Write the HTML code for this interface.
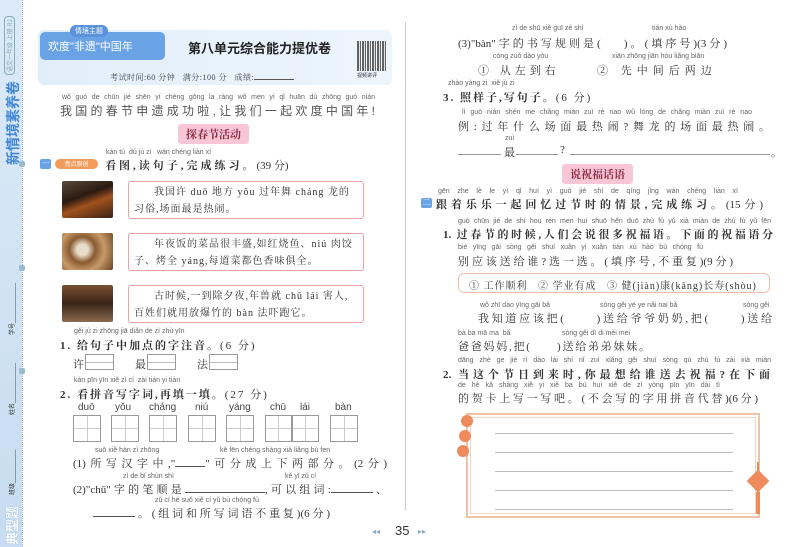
<!DOCTYPE html>
<html><head><meta charset="utf-8"><style>
*{margin:0;padding:0;box-sizing:border-box}
body{width:800px;height:547px;background:#fff;position:relative;overflow:hidden;font-family:"Liberation Serif","Noto Serif CJK SC","Noto Sans CJK SC",serif;color:#333}
.a{position:absolute;white-space:nowrap}
.j{position:absolute;white-space:nowrap;text-align:justify;text-align-last:justify;letter-spacing:0 !important;overflow:visible}
.py{font-family:"Liberation Sans",sans-serif;font-size:7px;color:#666}
.t{font-size:11px;color:#333;letter-spacing:2px}
.b{font-weight:bold}
.box{position:absolute;border:1px solid #999;background:linear-gradient(#bbb,#bbb) center/100% 1px no-repeat}
.tz{position:absolute;border:1px solid #999;background:linear-gradient(#ccc,#ccc) center/100% 1px no-repeat,linear-gradient(#ccc,#ccc) center/1px 100% no-repeat}
.sent{position:absolute;border:1.5px solid #e9a3a0;border-radius:3px;font-size:10px;line-height:17px;padding:2px 5px;color:#333;letter-spacing:1px}
.img{position:absolute;border-radius:2px}
.ln{position:absolute;height:1px;background:#999}
.tag{position:absolute;background:#f8c6d7;color:#8a2a40;font-weight:bold;font-size:11px;padding:2px 8px;border-radius:3px}
.rot{position:absolute;transform-origin:0 0;transform:rotate(-90deg);white-space:nowrap;font-family:'Liberation Sans','Noto Sans CJK SC',sans-serif}
</style></head><body>
<!-- sidebar -->
<div class="a" style="left:0;top:0;width:22px;height:547px;background:linear-gradient(#dceaf7,#c7dcf1)"></div>
<div class="a" style="left:22px;top:0;width:1px;height:547px;border-left:1px dotted #9bb8d8"></div>
<div class="rot" style="left:3px;top:165px;font-size:14px;font-weight:bold;color:#3f86d6">新情境素养卷</div>
<div class="rot" style="left:4px;top:75px;font-size:6px;color:#8aa;border:1px solid #8ab;border-radius:4px;padding:0 2px">语文一年级 上册 RJ</div>
<div class="rot" style="left:7px;top:335px;font-size:6px;color:#333">学号____________</div>
<div class="rot" style="left:7px;top:415px;font-size:6px;color:#333">姓名____________</div>
<div class="rot" style="left:7px;top:495px;font-size:6px;color:#333">班级__________</div>
<div class="rot" style="left:2px;top:545px;font-size:13px;font-weight:bold;color:#fff;text-shadow:0 0 1px #6aa0e0">典型题</div>
<div class="a" style="left:19px;top:161px;width:6px;height:6px;background:#9bc;border-radius:2px"></div>
<div class="a" style="left:19px;top:265px;width:6px;height:6px;background:#9bc;border-radius:2px"></div>
<div class="a" style="left:19px;top:368px;width:6px;height:6px;background:#9bc;border-radius:2px"></div>

<!-- header -->
<div class="a" style="left:38px;top:30px;width:354px;height:55px;background:linear-gradient(90deg,#e1eefa,#edf5fc);border-radius:6px"></div>
<div class="a" style="left:40px;top:32px;width:125px;height:28px;background:#6aa2e6;border-radius:5px;color:#fff;font-size:11px;padding:6px 8px;font-family:'Liberation Sans','Noto Sans CJK SC',sans-serif">欢度"非遗"中国年</div>
<div class="a" style="left:70px;top:25px;height:12px;background:#5b92dc;border-radius:6px;color:#fff;font-size:7px;padding:1px 5px;font-family:'Noto Sans CJK SC',sans-serif">情境主题</div>
<div class="a" style="left:188px;top:38px;font-size:13px;font-weight:bold;color:#222;font-family:'Liberation Sans','Noto Sans CJK SC',sans-serif">第八单元综合能力提优卷</div>
<div class="a" style="left:357px;top:41px;width:30px;height:30px;background:repeating-linear-gradient(90deg,#333 0 2px,#ddd 2px 3px,#333 3px 4px,#fff 4px 5px),#333;opacity:.75"></div>
<div class="a" style="left:357px;top:72px;font-size:5px;color:#333;font-family:'Noto Sans CJK SC',sans-serif">视频讲评</div>
<div class="a" style="left:110px;top:72px;font-size:8px;color:#444;letter-spacing:.5px">考试时间:60 分钟&nbsp;&nbsp; 满分:100 分&nbsp;&nbsp; 成绩:<span style="display:inline-block;width:40px;border-bottom:1px solid #555"></span></div>

<div class="j py" style="left:62px;top:94px;width:313px">wǒ guó de chūn jié shēn yí chéng gōng la ràng wǒ men yì qǐ huān dù zhōng guó nián</div>
<div class="j t" style="left:60px;top:102px;width:315px;font-size:12px;color:#555;font-family:'Liberation Sans','Noto Sans CJK SC',sans-serif">我国的春节申遗成功啦,让我们一起欢度中国年!</div>
<div class="tag" style="left:178px;top:124px">探春节活动</div>

<div class="a py" style="left:106px;top:149px">kàn tú &nbsp;dú jù zi &nbsp;&nbsp;wán chéng liàn xí</div>
<div class="a" style="left:40px;top:159px;width:11px;height:10px;background:#6aa2e6;border-radius:2px;color:#fff;font-size:8px;text-align:center;line-height:10px">一</div>
<div class="a" style="left:55px;top:159px;width:43px;height:10px;background:#f29b5a;border-radius:5px;color:#fff;font-size:6px;text-align:center;line-height:10px;font-family:'Noto Sans CJK SC',sans-serif">亮点原创</div>
<div class="a t b" style="left:105px;top:157px;font-size:11px;letter-spacing:3px">看图,读句子,完成练习。<span style="font-weight:normal;letter-spacing:0">(39 分)</span></div>

<div class="img" style="left:62px;top:181px;width:51px;height:37px;background:linear-gradient(160deg,#5a4a3a,#2a1a12 40%,#a0521d 60%,#3a2015)"></div>
<div class="sent" style="left:128px;top:181px;width:236px;height:38px;text-indent:20px">我国许 duō 地方 yǒu 过年舞 cháng 龙的习俗,场面最是热闹。</div>
<div class="img" style="left:62px;top:233px;width:51px;height:37px;background:radial-gradient(circle at 40% 45%,#e8dccb 15%,#8a5a30 35%,#c79a6a 60%,#6a4020)"></div>
<div class="sent" style="left:128px;top:233px;width:236px;height:38px;text-indent:20px">年夜饭的菜品很丰盛,如红烧鱼、niú 肉饺子、烤全 yáng,每道菜都色香味俱全。</div>
<div class="img" style="left:62px;top:285px;width:51px;height:37px;background:linear-gradient(180deg,#7a5030,#3a2418 50%,#8a6a50)"></div>
<div class="sent" style="left:128px;top:285px;width:236px;height:38px;text-indent:20px">古时候,一到除夕夜,年兽就 chū lái 害人,百姓们就用放爆竹的 bàn 法吓跑它。</div>

<div class="a py" style="left:74px;top:328px">gěi jù zi zhōng jiā diǎn de zì zhù yīn</div>
<div class="a t b" style="left:60px;top:337px">1. 给句子中加点的字注音。<span style="font-weight:normal">(6 分)</span></div>
<div class="a t" style="left:73px;top:356px">许</div><div class="box" style="left:85px;top:354px;width:29px;height:16px"></div>
<div class="a t" style="left:135px;top:356px">最</div><div class="box" style="left:147px;top:354px;width:29px;height:16px"></div>
<div class="a t" style="left:197px;top:356px">法</div><div class="box" style="left:209px;top:354px;width:29px;height:16px"></div>

<div class="a py" style="left:74px;top:377px">kàn pīn yīn xiě zì cí &nbsp;zài tián yi tián</div>
<div class="a t b" style="left:60px;top:386px">2. 看拼音写字词,再填一填。<span style="font-weight:normal">(27 分)</span></div>
<div class="a" style="left:78px;top:402px;font-family:'Liberation Sans',sans-serif;font-size:10px;color:#444">
<span class="a" style="left:0">duō</span><span class="a" style="left:37px">yǒu</span><span class="a" style="left:71px">cháng</span><span class="a" style="left:117px">niú</span><span class="a" style="left:151px">yáng</span><span class="a" style="left:192px">chū</span><span class="a" style="left:222px">lái</span><span class="a" style="left:257px">bàn</span></div>
<div class="tz" style="left:73px;top:415px;width:28px;height:27px"></div>
<div class="tz" style="left:111px;top:415px;width:28px;height:27px"></div>
<div class="tz" style="left:149px;top:415px;width:28px;height:27px"></div>
<div class="tz" style="left:188px;top:415px;width:28px;height:27px"></div>
<div class="tz" style="left:226px;top:415px;width:28px;height:27px"></div>
<div class="tz" style="left:265px;top:415px;width:27px;height:27px"></div>
<div class="tz" style="left:292px;top:415px;width:27px;height:27px"></div>
<div class="tz" style="left:330px;top:415px;width:28px;height:27px"></div>

<div class="a py" style="left:95px;top:447px">suǒ xiě hàn zì zhōng</div>
<div class="a py" style="left:220px;top:447px">kě fēn chéng shàng xià liǎng bù fen</div>
<div class="j t" style="left:73px;top:455px;width:314px">(1)所写汉字中,"<span style="display:inline-block;width:30px;border-bottom:1px solid #555"></span>"可分成上下两部分。(2分)</div>
<div class="a py" style="left:123px;top:473px">zì de bǐ shùn shì</div>
<div class="a py" style="left:285px;top:473px">kě yǐ zǔ cí</div>
<div class="j t" style="left:73px;top:481px;width:314px">(2)"chū"字的笔顺是<span style="display:inline-block;width:80px;border-bottom:1px solid #555"></span>,可以组词:<span style="display:inline-block;width:42px;border-bottom:1px solid #555"></span>、</div>
<div class="a py" style="left:155px;top:497px">zǔ cí hé suǒ xiě cí yǔ bù chóng fù</div>
<div class="j t" style="left:93px;top:505px;width:237px"><span style="display:inline-block;width:42px;border-bottom:1px solid #555"></span>。(组词和所写词语不重复)(6分)</div>

<div class="a" style="left:372px;top:527px;font-size:8px;color:#8ab">◂◂</div>
<div class="a" style="left:395px;top:523px;font-size:13px;color:#333;font-family:'Liberation Sans',sans-serif">35</div>
<div class="a" style="left:418px;top:527px;font-size:8px;color:#8ab">▸▸</div>

<div class="a" style="left:405px;top:22px;width:1px;height:488px;background:#ccc"></div>

<!-- right page -->
<div class="a py" style="left:512px;top:25px">zì de shū xiě guī zé shì</div>
<div class="a py" style="left:652px;top:25px">tián xù hào</div>
<div class="j t" style="left:458px;top:35px;width:269px">(3)"bàn"字的书写规则是(&nbsp;&nbsp;&nbsp;&nbsp;)。(填序号)(3分)</div>
<div class="a py" style="left:493px;top:53px">cóng zuǒ dào yòu</div>
<div class="a py" style="left:612px;top:53px">xiān zhōng jiān hòu liǎng biān</div>
<div class="a t" style="left:478px;top:62px;letter-spacing:4px">① 从左到右</div>
<div class="a t" style="left:597px;top:62px;letter-spacing:5px">② 先中间后两边</div>
<div class="a py" style="left:448px;top:80px">zhào yàng zi &nbsp;xiě jù zi</div>
<div class="a t b" style="left:443px;top:89px">3. 照样子,写句子。<span style="font-weight:normal">(6 分)</span></div>
<div class="j py" style="left:462px;top:109px;width:290px">lì guò nián shén me chǎng miàn zuì rè nao wǔ lóng de chǎng miàn zuì rè nao</div>
<div class="j t" style="left:458px;top:118px;width:312px">例:过年什么场面最热闹?舞龙的场面最热闹。</div>
<div class="a py" style="left:505px;top:135px">zuì</div>
<div class="ln" style="left:458px;top:154px;width:43px"></div>
<div class="a t" style="left:504px;top:144px">最</div>
<div class="ln" style="left:516px;top:154px;width:42px"></div>
<div class="a t" style="left:560px;top:144px">?</div>
<div class="ln" style="left:570px;top:154px;width:200px"></div>
<div class="a t" style="left:771px;top:144px">。</div>
<div class="tag" style="left:562px;top:164px">说祝福话语</div>

<div class="j py" style="left:438px;top:188px;width:300px">gēn zhe lè le yì qǐ huí yì guò jié shí de qíng jǐng wán chéng liàn xí</div>
<div class="a" style="left:421px;top:198px;width:11px;height:10px;background:#6aa2e6;border-radius:2px;color:#fff;font-size:8px;text-align:center;line-height:10px">二</div>
<div class="j t b" style="left:436px;top:196px;width:327px">跟着乐乐一起回忆过节时的情景,完成练习。<span style="font-weight:normal">(15分)</span></div>
<div class="j py" style="left:458px;top:218px;width:313px">guò chūn jié de shí hou rén men huì shuō hěn duō zhù fú yǔ xià miàn de zhù fú yǔ fēn</div>
<div class="j t b" style="left:443px;top:226px;width:330px">1. 过春节的时候,人们会说很多祝福语。下面的祝福语分</div>
<div class="j py" style="left:458px;top:244px;width:245px">bié yīng gāi sòng gěi shuí xuǎn yi xuǎn tián xù hào bù chóng fù</div>
<div class="j t" style="left:458px;top:253px;width:275px">别应该送给谁?选一选。(填序号,不重复)(9分)</div>
<div class="a" style="left:458px;top:273px;width:312px;height:20px;border:1.5px solid #ecc0a8;border-radius:6px;font-size:10px;padding:3px 10px;letter-spacing:1px;color:#333">① 工作顺利&nbsp;&nbsp; ② 学业有成&nbsp;&nbsp; ③ 健(jiàn)康(kāng)长寿(shòu)</div>
<div class="a py" style="left:480px;top:302px">wǒ zhī dào yīng gāi bǎ</div>
<div class="a py" style="left:600px;top:302px">sòng gěi yé ye nǎi nai bǎ</div>
<div class="a py" style="left:743px;top:302px">sòng gěi</div>
<div class="j t" style="left:478px;top:310px;width:294px">我知道应该把(&nbsp;&nbsp;&nbsp;&nbsp;&nbsp;&nbsp;)送给爷爷奶奶,把(&nbsp;&nbsp;&nbsp;&nbsp;&nbsp;&nbsp;)送给</div>
<div class="a py" style="left:458px;top:330px">bà ba mā ma &nbsp;bǎ</div>
<div class="a py" style="left:562px;top:330px">sòng gěi dì di mèi mei</div>
<div class="j t" style="left:458px;top:338px;width:192px">爸爸妈妈,把(&nbsp;&nbsp;&nbsp;&nbsp;&nbsp;&nbsp;)送给弟弟妹妹。</div>
<div class="j py" style="left:458px;top:357px;width:313px">dāng zhè ge jié rì dào lái shí nǐ zuì xiǎng gěi shuí sòng qù zhù fú zài xià miàn</div>
<div class="j t b" style="left:443px;top:366px;width:327px">2. 当这个节日到来时,你最想给谁送去祝福?在下面</div>
<div class="j py" style="left:458px;top:382px;width:262px">de hè kǎ shàng xiě yi xiě ba bù huì xiě de zì yòng pīn yīn dài tì</div>
<div class="j t" style="left:458px;top:390px;width:300px">的贺卡上写一写吧。(不会写的字用拼音代替)(6分)</div>

<div class="a" style="left:466px;top:413px;width:294px;height:105px;border:2px solid #f2c2a4"></div>
<div class="a" style="left:470px;top:417px;width:286px;height:97px;border:1px solid #f5d4be"></div>
<div class="ln" style="left:495px;top:433px;width:238px;background:#bbb"></div>
<div class="ln" style="left:495px;top:452px;width:238px;background:#bbb"></div>
<div class="ln" style="left:495px;top:471px;width:238px;background:#bbb"></div>
<div class="ln" style="left:495px;top:490px;width:238px;background:#bbb"></div>
<div class="ln" style="left:495px;top:509px;width:238px;background:#bbb"></div>
<div class="a" style="left:461px;top:415px;width:12px;height:12px;border-radius:50%;background:#ee8a5c"></div>
<div class="a" style="left:459px;top:430px;width:12px;height:12px;border-radius:50%;background:#ee8a5c"></div>
<div class="a" style="left:457px;top:445px;width:12px;height:12px;border-radius:50%;background:#ee8a5c"></div>
<div class="a" style="left:750px;top:473px;width:16px;height:16px;background:#ee8a5c;transform:rotate(45deg)"></div>
<div class="a" style="left:757px;top:462px;width:2px;height:10px;background:#ee8a5c"></div>
<div class="a" style="left:756px;top:492px;width:4px;height:22px;background:#ee8a5c"></div>
</body></html>
